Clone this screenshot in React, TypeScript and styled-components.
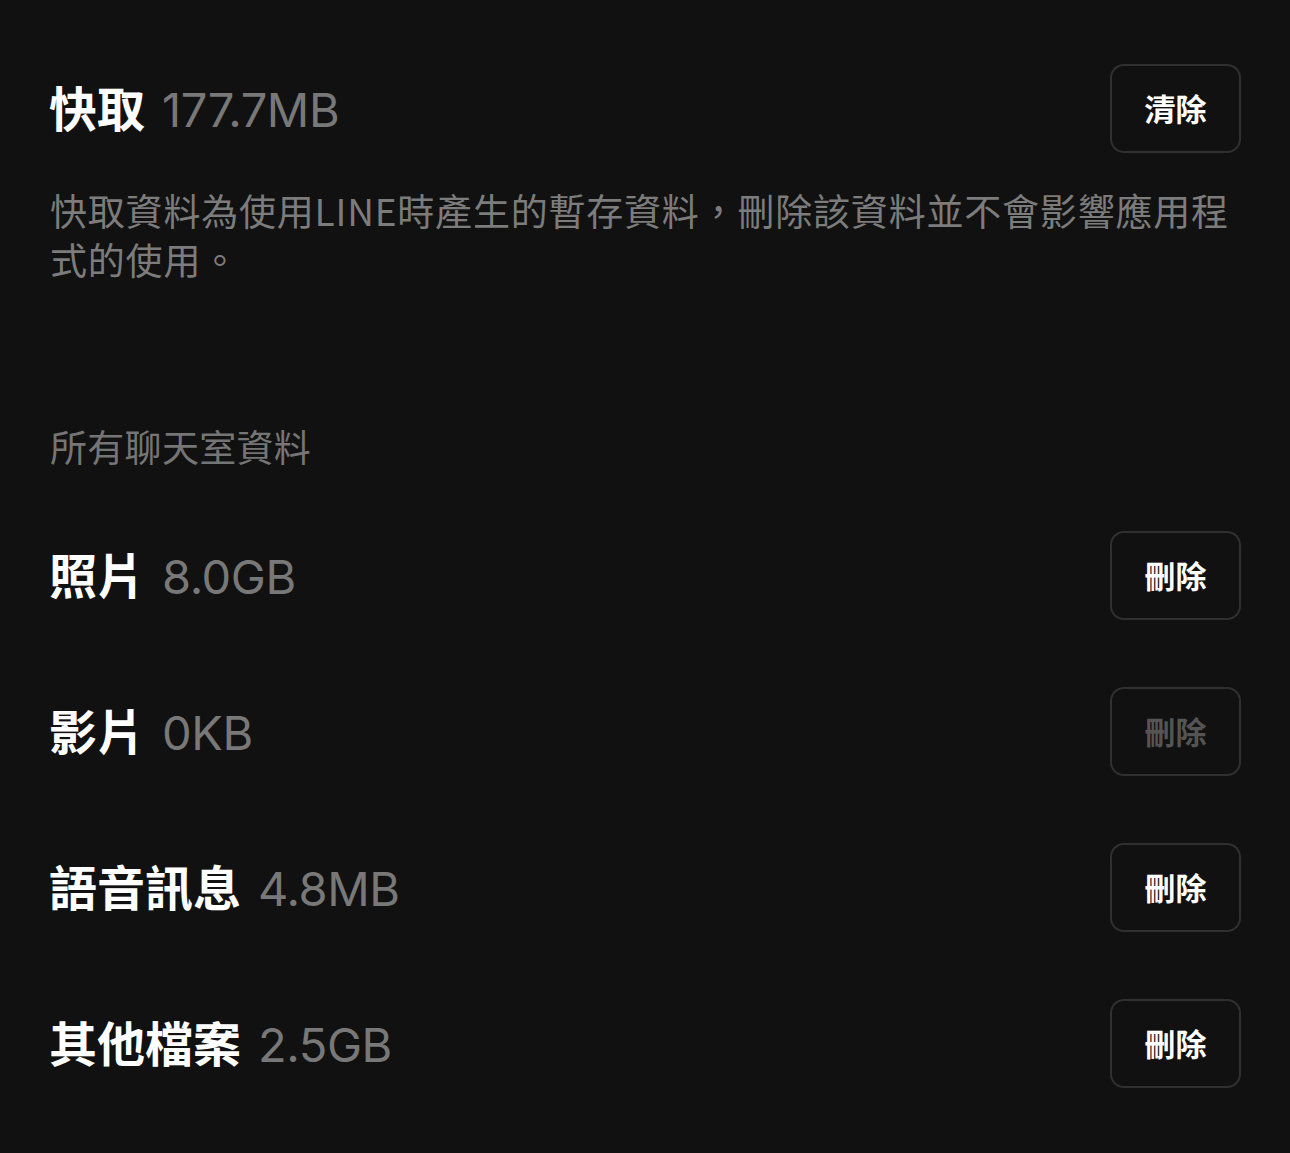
import React from "react";
import styled, { createGlobalStyle } from "styled-components";

const Global = createGlobalStyle`
  html, body { margin: 0; padding: 0; background: #111111; }
  body { font-family: Inter, "Noto Sans CJK TC", sans-serif; -webkit-font-smoothing: antialiased; }
`;

const Page = styled.div`
  background: #111111;
  min-height: 1153px;
  padding: 64px 49px 0 49px;
  box-sizing: border-box;
`;

const Row = styled.div`
  display: flex;
  align-items: center;
  justify-content: space-between;
  height: 89px;
`;

const RowGroup = styled.div`
  display: flex;
  flex-direction: column;
  gap: 67px;
  margin-top: 60px;
`;

const Label = styled.div`
  display: flex;
  align-items: baseline;
  gap: 17px;
  padding-bottom: 3px;
`;

const Title = styled.span`
  font-family: "Noto Sans CJK TC", sans-serif;
  font-weight: 700;
  font-size: 48px;
  color: #ffffff;
  line-height: 1;
`;

const Size = styled.span`
  font-family: Inter, "Noto Sans CJK TC", sans-serif;
  font-weight: 400;
  font-size: 47px;
  letter-spacing: -0.4px;
  color: #787878;
  line-height: 1;
`;

const Button = styled.button<{ $disabled?: boolean }>`
  width: 131px;
  height: 89px;
  box-sizing: border-box;
  border: 2.5px solid #303030;
  border-radius: 14px;
  background: transparent;
  font-family: "Noto Sans CJK TC", sans-serif;
  font-weight: 700;
  font-size: 31px;
  color: ${(p) => (p.$disabled ? "#545454" : "#ffffff")};
  padding: 0 0 3px;
  cursor: pointer;
`;

const Description = styled.p`
  margin: 33px 0 0 1px;
  font-family: "Noto Sans CJK TC", sans-serif;
  font-size: 37px;
  letter-spacing: 0.8px;
  line-height: 49px;
  color: #7c7c7c;
  font-weight: 400;
`;

const SectionHeader = styled.div`
  margin-top: 137px;
  margin-left: 1px;
  font-family: "Noto Sans CJK TC", sans-serif;
  font-size: 37px;
  letter-spacing: 0.3px;
  line-height: 50px;
  color: #757575;
`;

const items = [
  { title: "照片", size: "8.0GB", disabled: false },
  { title: "影片", size: "0KB", disabled: true },
  { title: "語音訊息", size: "4.8MB", disabled: false },
  { title: "其他檔案", size: "2.5GB", disabled: false },
];

export default function App() {
  return (
    <>
      <Global />
      <Page>
        <Row>
          <Label>
            <Title>快取</Title>
            <Size>177.7MB</Size>
          </Label>
          <Button>清除</Button>
        </Row>
        <Description>
          快取資料為使用LINE時產生的暫存資料，刪除該資料並不會影響應用程式的使用。
        </Description>
        <SectionHeader>所有聊天室資料</SectionHeader>
        <RowGroup>
          {items.map((it) => (
            <Row key={it.title}>
              <Label>
                <Title>{it.title}</Title>
                <Size>{it.size}</Size>
              </Label>
              <Button $disabled={it.disabled}>刪除</Button>
            </Row>
          ))}
        </RowGroup>
      </Page>
    </>
  );
}
